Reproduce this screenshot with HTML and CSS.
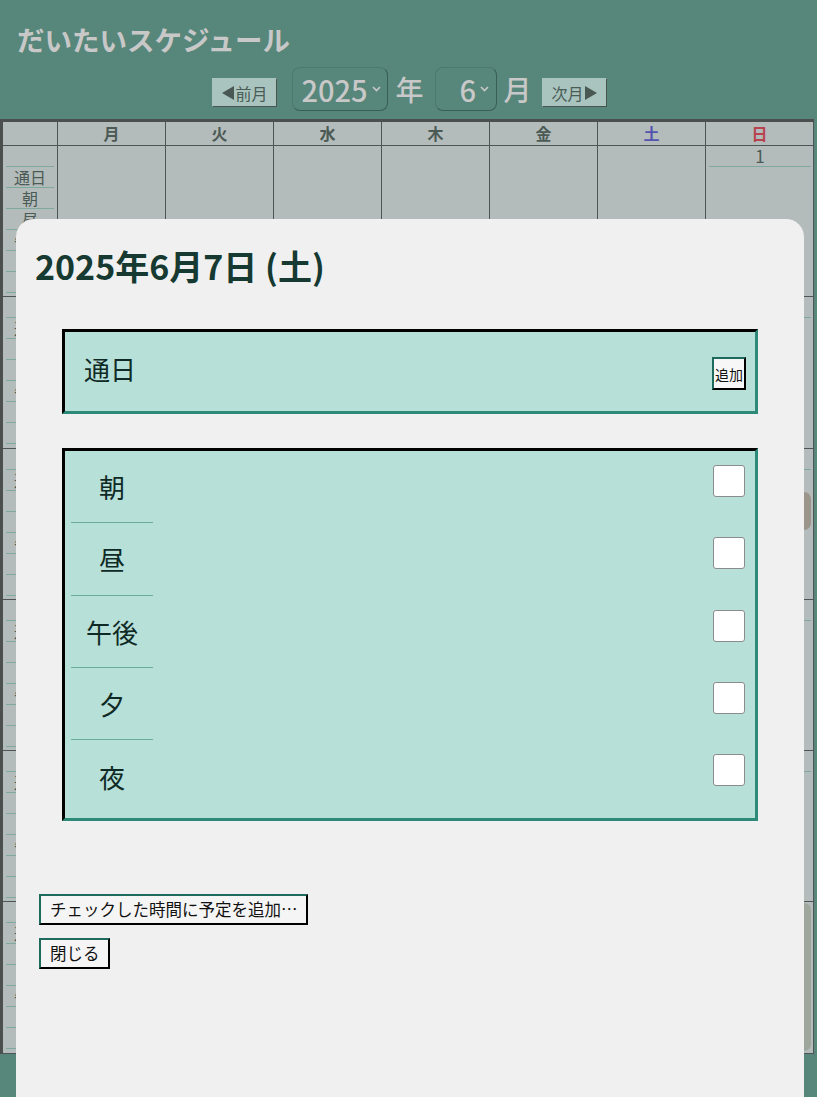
FILE: index.html
```html
<!DOCTYPE html>
<html lang="ja">
<head>
<meta charset="utf-8">
<title>だいたいスケジュール</title>
<link rel="stylesheet" href="styles.css">
</head>
<body>
<header class="top">
  <h1 class="app-title">だいたいスケジュール</h1>
  <nav class="month-nav">
    <button class="nav-btn prev"><svg class="tri" width="12" height="14" viewBox="0 0 12 14"><path d="M12 0 L12 14 L0 7 Z"/></svg>前月</button>
    <div class="select select-year"><span>2025</span><svg class="chev" width="9" height="6" viewBox="0 0 9 6"><path d="M1 1 L4.5 4.5 L8 1"/></svg></div>
    <span class="unit unit-year">年</span>
    <div class="select select-month"><span>6</span><svg class="chev" width="9" height="6" viewBox="0 0 9 6"><path d="M1 1 L4.5 4.5 L8 1"/></svg></div>
    <span class="unit unit-month">月</span>
    <button class="nav-btn next">次月<svg class="tri" width="12" height="14" viewBox="0 0 12 14"><path d="M0 0 L0 14 L12 7 Z"/></svg></button>
  </nav>
</header>

<main class="calendar">
  <div class="cal-head">
    <div class="hcell"></div>
    <div class="hcell">月</div>
    <div class="hcell">火</div>
    <div class="hcell">水</div>
    <div class="hcell">木</div>
    <div class="hcell">金</div>
    <div class="hcell sat">土</div>
    <div class="hcell sun">日</div>
  </div>

  <div class="week">
    <div class="lab-col"><div class="slot"></div><div class="slot">通日</div><div class="slot">朝</div><div class="slot">昼</div><div class="slot">午後</div><div class="slot">夕</div><div class="slot">夜</div></div>
    <div class="day out"></div><div class="day out"></div><div class="day out"></div><div class="day out"></div><div class="day out"></div><div class="day out"></div>
    <div class="day"><div class="date">1</div></div>
  </div>

  <div class="week">
    <div class="lab-col"><div class="slot"></div><div class="slot">通日</div><div class="slot">朝</div><div class="slot">昼</div><div class="slot">午後</div><div class="slot">夕</div><div class="slot">夜</div></div>
    <div class="day"><div class="date">2</div></div><div class="day"><div class="date">3</div></div><div class="day"><div class="date">4</div></div><div class="day"><div class="date">5</div></div><div class="day"><div class="date">6</div></div><div class="day"><div class="date">7</div></div><div class="day"><div class="date">8</div></div>
  </div>

  <div class="week">
    <div class="lab-col"><div class="slot"></div><div class="slot">通日</div><div class="slot">朝</div><div class="slot">昼</div><div class="slot">午後</div><div class="slot">夕</div><div class="slot">夜</div></div>
    <div class="day"><div class="date">9</div></div><div class="day"><div class="date">10</div></div><div class="day"><div class="date">11</div></div><div class="day"><div class="date">12</div></div><div class="day"><div class="date">13</div></div><div class="day"><div class="date">14</div></div>
    <div class="day"><div class="date">15</div><div class="event"></div></div>
  </div>

  <div class="week">
    <div class="lab-col"><div class="slot"></div><div class="slot">通日</div><div class="slot">朝</div><div class="slot">昼</div><div class="slot">午後</div><div class="slot">夕</div><div class="slot">夜</div></div>
    <div class="day"><div class="date">16</div></div><div class="day"><div class="date">17</div></div><div class="day"><div class="date">18</div></div><div class="day"><div class="date">19</div></div><div class="day"><div class="date">20</div></div><div class="day"><div class="date">21</div></div><div class="day"><div class="date">22</div></div>
  </div>

  <div class="week">
    <div class="lab-col"><div class="slot"></div><div class="slot">通日</div><div class="slot">朝</div><div class="slot">昼</div><div class="slot">午後</div><div class="slot">夕</div><div class="slot">夜</div></div>
    <div class="day"><div class="date">23</div></div><div class="day"><div class="date">24</div></div><div class="day"><div class="date">25</div></div><div class="day"><div class="date">26</div></div><div class="day"><div class="date">27</div></div><div class="day"><div class="date">28</div></div><div class="day"><div class="date">29</div></div>
  </div>

  <div class="week">
    <div class="lab-col"><div class="slot"></div><div class="slot">通日</div><div class="slot">朝</div><div class="slot">昼</div><div class="slot">午後</div><div class="slot">夕</div><div class="slot">夜</div></div>
    <div class="day"><div class="date">30</div></div><div class="day out"></div><div class="day out"></div><div class="day out"></div><div class="day out"></div><div class="day out"></div>
    <div class="day out"><div class="blocked"></div></div>
  </div>
</main>

<div class="modal">
  <h2 class="modal-title">2025年6月7日 (土)</h2>

  <div class="allday">
    <span class="allday-label">通日</span>
    <button class="add-btn">追加</button>
  </div>

  <div class="slots">
    <div class="slot-row"><span class="slot-label">朝</span><input type="checkbox" class="check"></div>
    <div class="slot-row"><span class="slot-label">昼</span><input type="checkbox" class="check"></div>
    <div class="slot-row"><span class="slot-label">午後</span><input type="checkbox" class="check"></div>
    <div class="slot-row"><span class="slot-label">夕</span><input type="checkbox" class="check"></div>
    <div class="slot-row last"><span class="slot-label">夜</span><input type="checkbox" class="check"></div>
  </div>

  <div class="actions">
    <button class="act-btn">チェックした時間に予定を追加…</button>
    <button class="act-btn">閉じる</button>
  </div>
</div>
</body>
</html>
```

FILE: styles.css
```css
* { box-sizing: border-box; }

html, body {
  margin: 0;
  height: 100%;
  overflow: hidden;
}

body {
  position: relative;
  background: #57867a;
  font-family: "Noto Sans CJK JP", "Noto Sans", sans-serif;
}

/* ---------- header ---------- */
.top {
  height: 119px;
  display: flex;
  flex-direction: column;
}

.app-title {
  margin: 0;
  padding: 19px 0 0 17px;
  font-size: 27.5px;
  line-height: 40px;
  font-weight: 700;
  color: #c8c8c8;
}

.month-nav {
  margin-top: 8px;
  display: flex;
  justify-content: center;
  align-items: flex-start;
  padding-left: 2px;
}

.nav-btn {
  margin-top: 11px;
  height: 29px;
  padding: 0;
  display: flex;
  align-items: center;
  justify-content: center;
  gap: 1px;
  font-family: inherit;
  font-size: 16px;
  color: #4b5b56;
  background: #a9c4be;
  border: 1px solid;
  border-color: #a9c4be #48564f #48564f #a9c4be;
}
.nav-btn.prev { width: 65px; margin-right: 15px; }
.nav-btn.next { width: 65px; margin-left: 10px; }
.tri { fill: #4a5853; }

.select {
  height: 44px;
  display: flex;
  align-items: center;
  border: 1px solid;
  border-color: #4a7a6e #3a5e55 #3a5e55 #4a7a6e;
  border-radius: 8px;
  font-size: 29px;
  font-weight: 500;
  color: #c8c8c8;
}
.select-year { width: 96px; padding-left: 8px; }
.select-month { width: 62px; padding-left: 24px; }
.chev {
  margin-left: 4px;
  fill: none;
  stroke: #c8c8c8;
  stroke-width: 1.6;
}

.unit {
  font-size: 28px;
  line-height: 44px;
  font-weight: 500;
  color: #c8c8c8;
}
.unit-year { margin: 0 11px 0 7px; }
.unit-month { margin: 0 0 0 7px; }

/* ---------- calendar ---------- */
.calendar {
  width: 814px;
  border-top: 3px solid #4b4f4e;
  border-left: 3px solid #4b4f4e;
  background: #b3bcba;
}

.cal-head,
.week {
  display: grid;
  grid-template-columns: 55px repeat(7, 108px);
}

.cal-head {
  height: 24px;
  border-bottom: 1px solid #4f5554;
}

.hcell {
  border-right: 1px solid #4f5554;
  text-align: center;
  font-size: 16px;
  line-height: 22px;
  font-weight: 700;
  color: #4c5a56;
}
.hcell.sat { color: #5454b0; }
.hcell.sun { color: #b8434e; }

.week {
  height: 151.25px;
  border-bottom: 1px solid #4f5554;
}

.lab-col,
.day {
  border-right: 1px solid #4f5554;
  display: flex;
  flex-direction: column;
}

.slot {
  height: 21px;
  margin: 0 3px;
  border-bottom: 1px solid #7fa99c;
  text-align: center;
  font-size: 16px;
  line-height: 20px;
  color: #4c5a56;
}

.date {
  height: 21px;
  margin: 0 2px 0 3px;
  border-bottom: 1px solid #7fa99c;
  text-align: center;
  font-size: 17px;
  line-height: 20px;
  color: #4c5a56;
}

.event {
  height: 38px;
  margin: 22px 2px 0 3px;
  border-radius: 7px;
  background: #9b958c;
}

.blocked {
  flex: 1;
  margin: 1px 2px 2px 3px;
  border-radius: 7px;
  background: #9fa69c;
}

/* ---------- modal ---------- */
.modal {
  position: absolute;
  top: 219px;
  left: 16px;
  width: 788px;
  height: 900px;
  padding: 26px 19px 0;
  background: #f0f0f0;
  border-radius: 18px 18px 0 0;
}

.modal-title {
  margin: 0;
  font-size: 34px;
  line-height: 42px;
  font-weight: 700;
  color: #163a31;
}

.allday,
.slots {
  margin: 0 27px;
  background: #b7e0d9;
  border: 3px solid;
  border-color: #000 #2e8a78 #2e8a78 #000;
}

.allday {
  margin-top: 42px;
  height: 85px;
  display: flex;
  align-items: center;
  justify-content: space-between;
  padding: 0 9px 0 19px;
}

.allday-label {
  margin-bottom: 5px;
  font-size: 26px;
  line-height: 36px;
  color: #0f2a25;
}

.add-btn {
  margin-top: 4px;
  height: 33px;
  padding: 0 1px;
  font-family: inherit;
  font-size: 14px;
  color: #111;
  background: #f7f7f7;
  border: 2px solid;
  border-color: #1e6b5d #000 #000 #1e6b5d;
}

.slots {
  margin-top: 34px;
  padding: 0 10px 6px 6px;
}

.slot-row {
  height: 72.3px;
  display: flex;
  justify-content: space-between;
  align-items: flex-start;
}

.slot-label {
  width: 82px;
  height: 100%;
  display: flex;
  align-items: center;
  justify-content: center;
  border-bottom: 1px solid #6aab9a;
  font-size: 26px;
  color: #0f2a25;
}
.slot-row.last .slot-label { border-bottom: none; }

.check {
  appearance: none;
  -webkit-appearance: none;
  width: 32px;
  height: 32px;
  margin: 14px 0 0;
  background: #fff;
  border: 1px solid #8c8c8c;
  border-radius: 3px;
}

.actions {
  margin-top: 73px;
  padding-left: 4px;
  display: flex;
  flex-direction: column;
  align-items: flex-start;
  gap: 13px;
}

.act-btn {
  padding: 2px 8px 2px 9px;
  font-family: inherit;
  font-size: 16.5px;
  line-height: 23px;
  color: #111;
  background: #f5f5f5;
  border: 2px solid;
  border-color: #1e6b5d #000 #000 #1e6b5d;
}
```
